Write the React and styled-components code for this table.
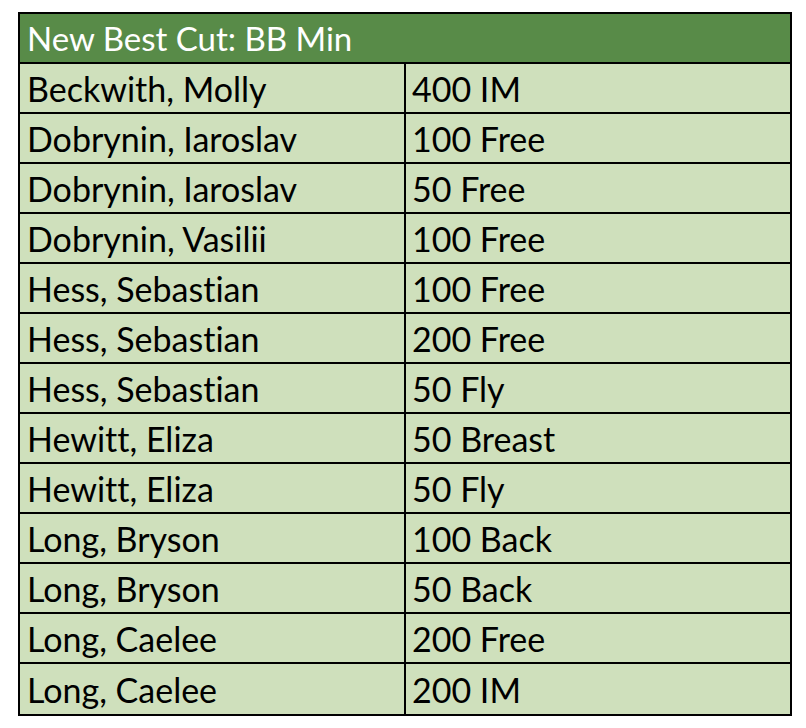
import React from 'react';
import styled, { createGlobalStyle } from 'styled-components';

const GlobalStyle = createGlobalStyle`
  body {
    margin: 0;
    background: #ffffff;
    font-family: Lato, "Open Sans", sans-serif;
    font-variant-ligatures: none;
  }
`;

const Page = styled.div`
  padding: 12px 0 0 18px;
`;

const Table = styled.div`
  width: 774px;
  border: 2px solid #000;
  box-sizing: border-box;
  display: grid;
  grid-template-columns: 386px 1fr;
`;

const Header = styled.div`
  grid-column: 1 / span 2;
  height: 50px;
  box-sizing: border-box;
  background: #588b48;
  color: #fff;
  font-size: 33px;
  display: flex;
  align-items: center;
  padding-left: 7px;
  border-bottom: 2px solid #000;
`;

const Cell = styled.div`
  height: 50px;
  box-sizing: border-box;
  background: #cfe0bc;
  color: #000;
  font-size: 34px;
  display: flex;
  align-items: center;
  padding-left: ${p => (p.$right ? '6px' : '7px')};
  border-right: ${p => (p.$right ? 'none' : '2px solid #000')};
  border-bottom: ${p => (p.$last ? 'none' : '2px solid #000')};
`;

const rows = [
  ['Beckwith, Molly', '400 IM'],
  ['Dobrynin, Iaroslav', '100 Free'],
  ['Dobrynin, Iaroslav', '50 Free'],
  ['Dobrynin, Vasilii', '100 Free'],
  ['Hess, Sebastian', '100 Free'],
  ['Hess, Sebastian', '200 Free'],
  ['Hess, Sebastian', '50 Fly'],
  ['Hewitt, Eliza', '50 Breast'],
  ['Hewitt, Eliza', '50 Fly'],
  ['Long, Bryson', '100 Back'],
  ['Long, Bryson', '50 Back'],
  ['Long, Caelee', '200 Free'],
  ['Long, Caelee', '200 IM'],
];

const App = () => {
  return (
    <Page>
      <GlobalStyle />
      <Table>
        <Header>New Best Cut: BB Min</Header>
        {rows.map(([name, event], i) => (
          <React.Fragment key={i}>
            <Cell $last={i === rows.length - 1}>{name}</Cell>
            <Cell $right $last={i === rows.length - 1}>{event}</Cell>
          </React.Fragment>
        ))}
      </Table>
    </Page>
  );
};

export default App;
